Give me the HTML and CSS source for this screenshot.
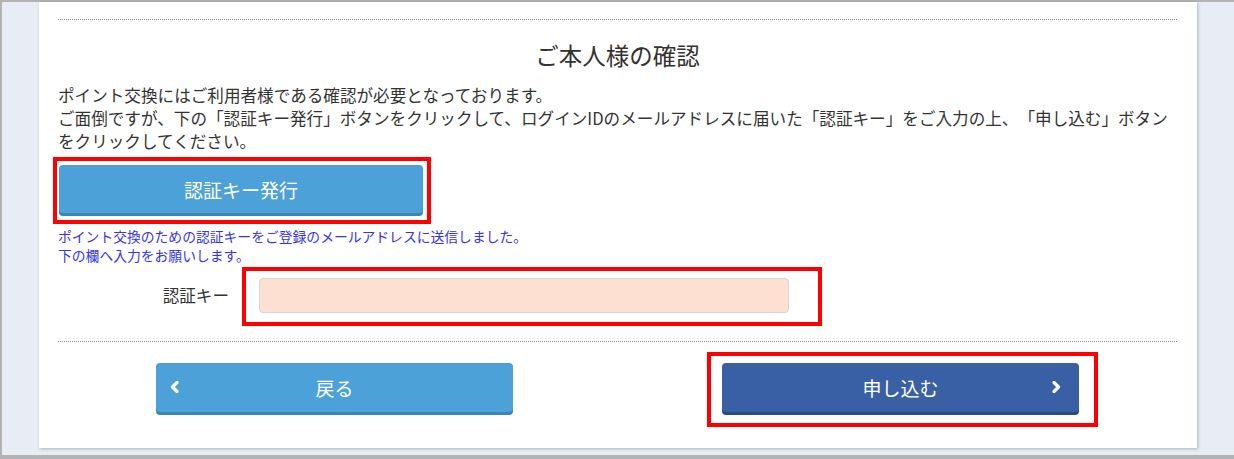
FILE: index.html
```html
<!DOCTYPE html>
<html lang="ja">

<head>
    <meta charset="UTF-8">
    <meta name="viewport" content="width=device-width, initial-scale=1.0">
    <title>ご本人様の確認</title>
    <link rel="stylesheet" href="styles.css">
</head>

<body>
    <div class="frame">
        <div class="page">
            <div class="card">
                <hr class="dots">
                <h2 class="title">ご本人様の確認</h2>
                <p class="lead">ポイント交換にはご利用者様である確認が必要となっております。<br>ご面倒ですが、下の「認証キー発行」ボタンをクリックして、ログインIDのメールアドレスに届いた「認証キー」をご入力の上、「申し込む」ボタンをクリックしてください。</p>

                <div class="mark mark-issue">
                    <button class="btn btn-issue" type="button">認証キー発行</button>
                </div>

                <p class="notice">ポイント交換のための認証キーをご登録のメールアドレスに送信しました。<br>下の欄へ入力をお願いします。</p>

                <div class="field">
                    <label class="field-label" for="auth-key">認証キー</label>
                    <div class="mark mark-input">
                        <input class="field-input" id="auth-key" type="text">
                    </div>
                </div>

                <hr class="dots">

                <div class="actions">
                    <button class="btn btn-back" type="button">
                        <svg class="chev chev-left" width="10" height="12" viewBox="0 0 10 12"><polyline points="7,1.5 2.5,6 7,10.5" /></svg>
                        戻る
                    </button>
                    <div class="mark mark-submit">
                        <button class="btn btn-submit" type="button">
                            申し込む
                            <svg class="chev chev-right" width="10" height="12" viewBox="0 0 10 12"><polyline points="3,1.5 7.5,6 3,10.5" /></svg>
                        </button>
                    </div>
                </div>
            </div>
        </div>
    </div>
</body>

</html>
```

FILE: styles.css
```css
html,
body {
    margin: 0;
    padding: 0;
}

body {
    font-family: "Noto Sans CJK JP", "Noto Sans", sans-serif;
    color: #333;
    background-color: #e8edf5;
    text-spacing-trim: space-all;
}

.frame {
    border-top: 2px solid #b3b3b3;
    border-left: 2px solid #b3b3b3;
    border-bottom: 4px solid #b3b3b3;
}

.page {
    padding: 0 37px 7px 37px;
    background-color: #e8edf5;
}

.card {
    width: 1158px;
    box-sizing: border-box;
    padding: 17px 20px 36px 19px;
    background-color: #fff;
    box-shadow: 1px 1px 3px rgba(0, 0, 0, 0.25);
}

.dots {
    height: 0;
    margin: 0;
    border: 0;
    border-top: 1px dotted #8c8c8c;
}

.title {
    margin: 18px 0 0;
    font-size: 23.5px;
    font-weight: normal;
    line-height: 34px;
    text-align: center;
}

.lead {
    margin: 12px 0 0;
    font-size: 16.6px;
    line-height: 23px;
}

/* red annotation frames */
.mark {
    position: relative;
    width: fit-content;
}

.mark::after {
    content: "";
    position: absolute;
    border: 4px solid #ff0000;
    pointer-events: none;
}

.mark-issue {
    margin: 12px 0 0 1px;
}

.mark-issue::after {
    top: -8px;
    left: -6px;
    right: -8px;
    bottom: -11px;
}

.mark-input::after {
    top: -11px;
    left: -17px;
    right: -33px;
    bottom: -13px;
}

.mark-submit::after {
    top: -11px;
    left: -15px;
    right: -19px;
    bottom: -15px;
}

.btn {
    position: relative;
    display: block;
    border: 0;
    border-radius: 4px;
    color: #fff;
    font-family: inherit;
    font-size: 19px;
    cursor: pointer;
}

.btn-issue {
    width: 364px;
    height: 48px;
    background-color: #4ca1d8;
    box-shadow: 0 3px 0 #3b84bb;
}

.notice {
    margin: 14px 0 0;
    font-size: 13.8px;
    line-height: 19px;
    color: #3434ee;
}

.field {
    display: flex;
    align-items: center;
    margin-top: 13px;
}

.field-label {
    width: 171px;
    padding-right: 30px;
    font-size: 16.6px;
    line-height: 35px;
    text-align: right;
}

.field-input {
    display: block;
    width: 530px;
    height: 35px;
    box-sizing: border-box;
    border: 1px solid #d9d5d2;
    border-radius: 4px;
    background-color: #fde0d1;
}

.field + .dots {
    margin-top: 28px;
}

.actions {
    display: flex;
    justify-content: center;
    gap: 209px;
    margin-top: 21px;
}

.btn-back,
.btn-submit {
    width: 357px;
    height: 49px;
}

.btn-back {
    background-color: #4ca1d8;
    box-shadow: 0 3px 0 #3b84bb;
}

.btn-submit {
    background-color: #3960a4;
    box-shadow: 0 3px 0 #284a86;
}

.chev {
    position: absolute;
    top: 18px;
}

.chev polyline {
    fill: none;
    stroke: #fff;
    stroke-width: 3.2;
    stroke-linecap: round;
    stroke-linejoin: round;
}

.chev-left {
    left: 14px;
}

.chev-right {
    right: 18px;
}
```
